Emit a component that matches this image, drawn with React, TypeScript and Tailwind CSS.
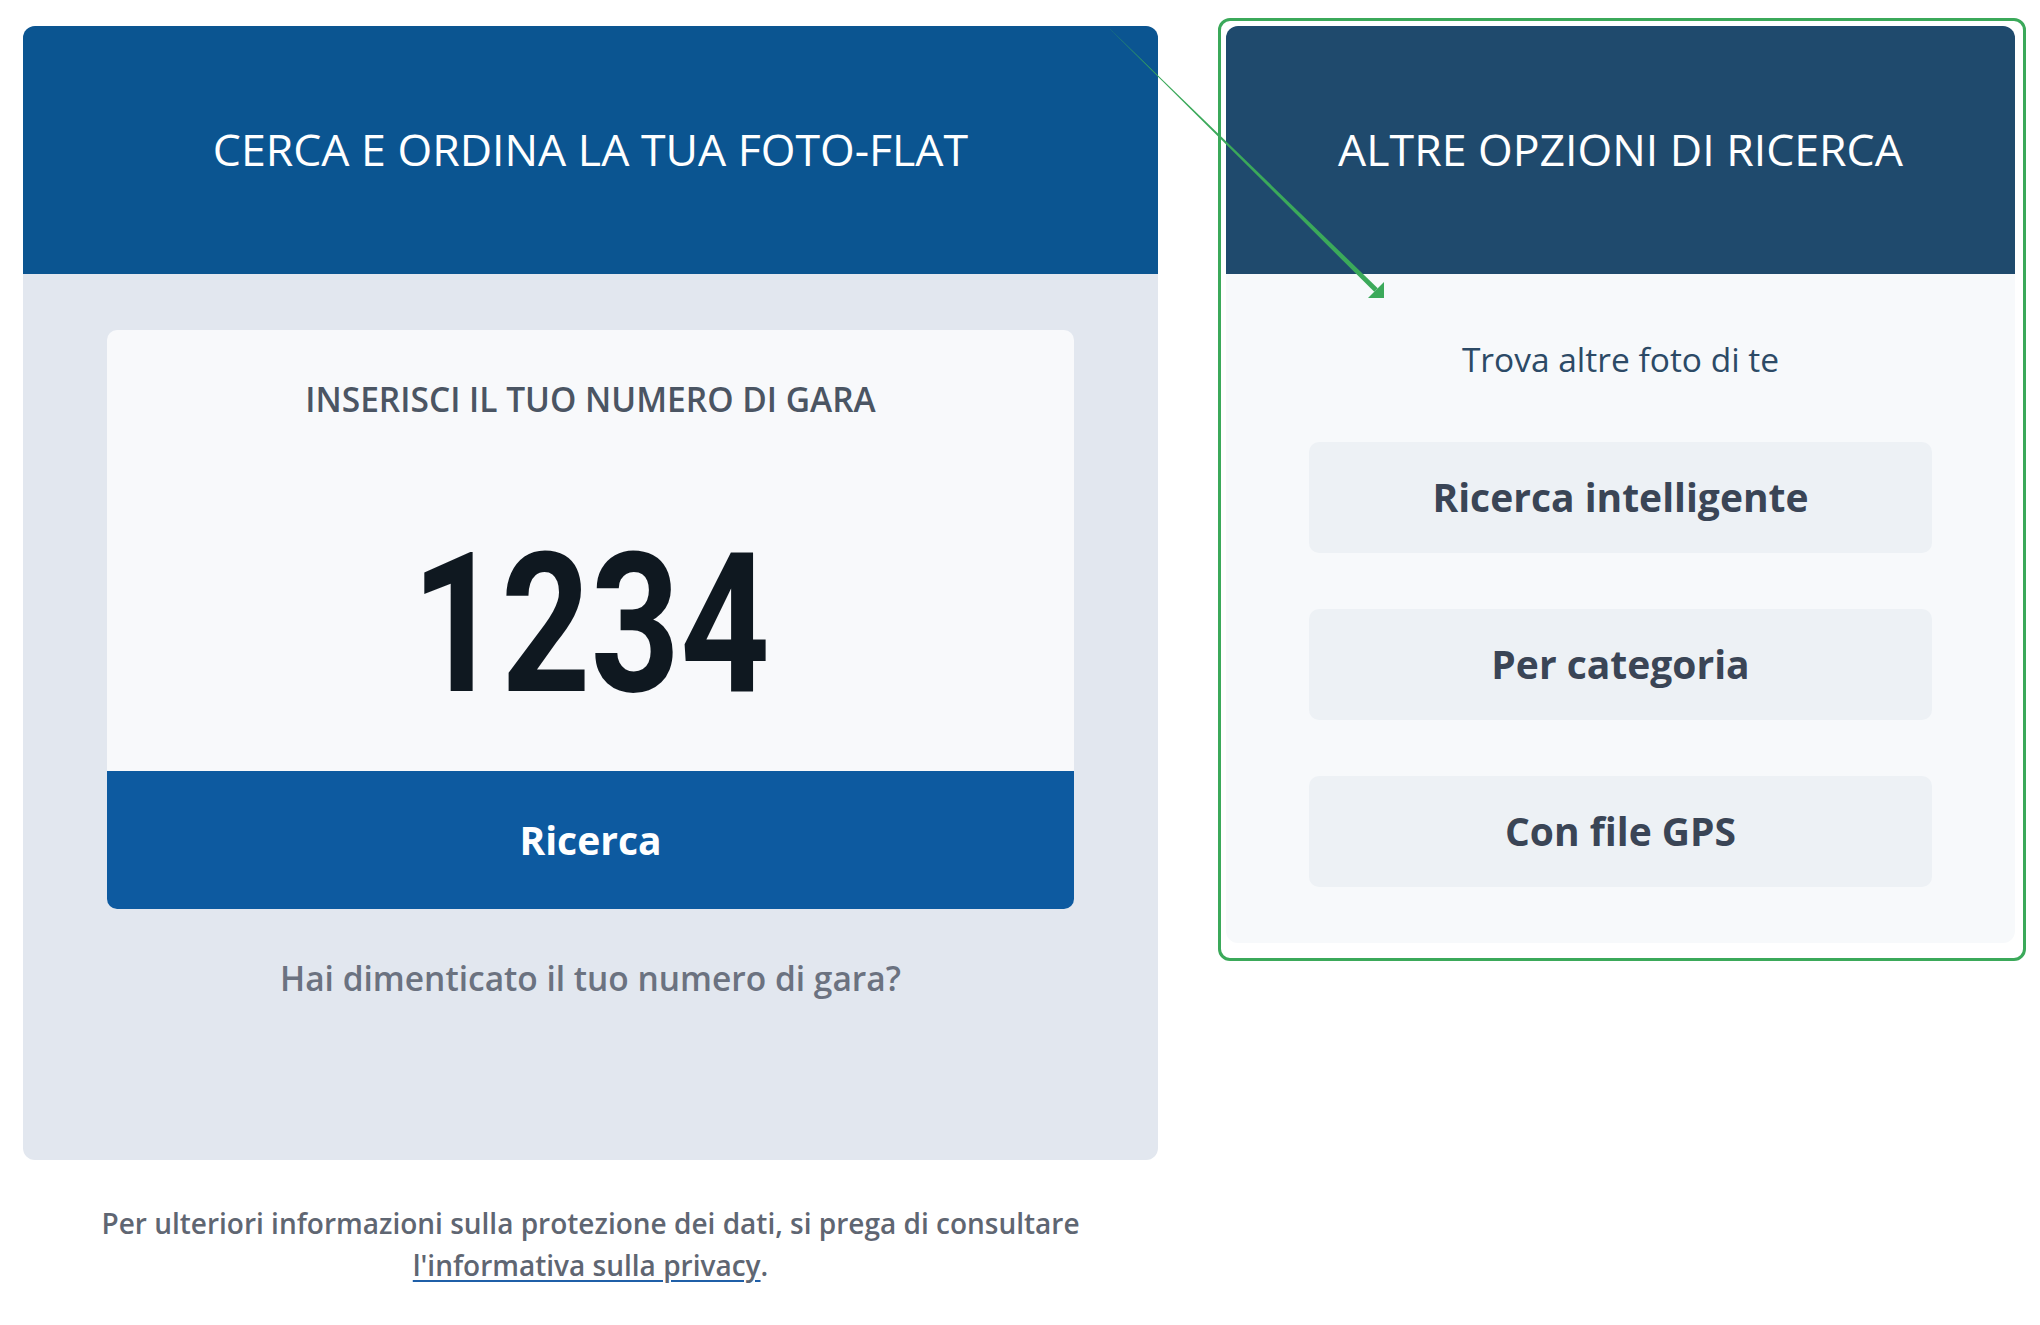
import React from "react";

export default function App() {
  return (
    <div className="relative w-[2040px] h-[1325px] bg-white font-['Open_Sans',sans-serif] overflow-hidden">
      <div className="flex items-start pl-[23px] pt-[26px] gap-[68px]">
        {/* Left column */}
        <div className="w-[1135px] flex flex-col">
          <div className="h-[1134px] rounded-[12px] overflow-hidden bg-[#e2e7ef] flex flex-col">
            <div className="h-[248px] bg-[#0b5591] flex items-center justify-center text-white text-[44.6px] pb-[2px]">
              CERCA E ORDINA LA TUA FOTO-FLAT
            </div>
            <div className="px-[84px] pt-[56px] flex flex-col">
              <div className="rounded-[10px] overflow-hidden bg-[#f8f9fb] flex flex-col">
                <div className="h-[441px] flex flex-col items-center">
                  <div className="pt-[49px] text-[33.5px] leading-[40px] font-semibold text-[#4b5563]">
                    INSERISCI IL TUO NUMERO DI GARA
                  </div>
                  <div className="flex-1 w-full flex items-center justify-center pt-[60px]">
                    <span className="font-['Roboto',sans-serif] font-bold text-[194px] leading-none text-[#0f1820] inline-block scale-x-[0.805]">
                      1234
                    </span>
                  </div>
                </div>
                <button className="h-[138px] bg-[#0d5aa0] text-white font-bold text-[39px] flex items-center justify-center">
                  Ricerca
                </button>
              </div>
              <div className="mt-[49px] text-center text-[33.5px] leading-[40px] font-semibold text-[#6b7280]">
                Hai dimenticato il tuo numero di gara?
              </div>
            </div>
          </div>
          <div className="mt-[42px] text-center text-[28px] leading-[42px] font-semibold text-[#5f6672]">
            Per ulteriori informazioni sulla protezione dei dati, si prega di consultare
            <br />
            <a className="underline decoration-[#1f5fa8] decoration-2 underline-offset-4">
              l'informativa sulla privacy
            </a>
            .
          </div>
        </div>

        {/* Right column */}
        <div className="relative w-[789px]">
          <div className="h-[917px] rounded-[12px] overflow-hidden bg-[#f7f9fb] flex flex-col">
            <div className="h-[248px] bg-[#1f4a6d] flex items-center justify-center text-white text-[44.6px] pb-[2px]">
              ALTRE OPZIONI DI RICERCA
            </div>
            <div className="flex flex-col items-center">
              <div className="mt-[65px] text-[33.5px] leading-[40px] text-[#2c4a66]">
                Trova altre foto di te
              </div>
              <div className="mt-[63px] flex flex-col gap-[56px]">
                {["Ricerca intelligente", "Per categoria", "Con file GPS"].map((t) => (
                  <button
                    key={t}
                    className="w-[623px] h-[111px] rounded-[10px] bg-[#edf1f5] text-[39px] font-bold text-[#3a4556] flex items-center justify-center"
                  >
                    {t}
                  </button>
                ))}
              </div>
            </div>
          </div>
          <div className="absolute -left-[8px] -top-[8px] -right-[11px] -bottom-[18px] border-[3px] border-[#3ba95a] rounded-[12px] pointer-events-none" />
        </div>
      </div>

      {/* annotation arrow */}
      <svg className="absolute left-0 top-0 pointer-events-none" width="2040" height="1325" viewBox="0 0 2040 1325">
        <polygon points="1109.8,28.8 1110.2,29.2 1374.25,291.8 1377.75,288.2" fill="#3ba95a" />
        <polygon points="1384,282 1384,298 1368,298" fill="#3ba95a" />
      </svg>
    </div>
  );
}
